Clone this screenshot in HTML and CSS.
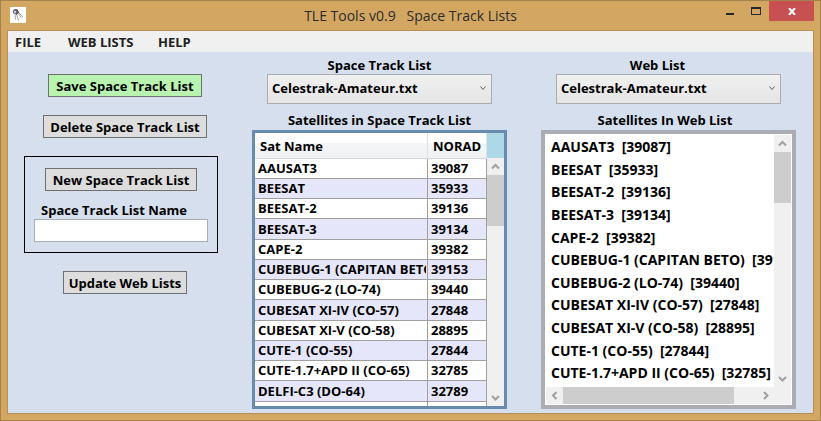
FILE: index.html
```html
<!DOCTYPE html>
<html lang="en">
<head>
<meta charset="utf-8">
<title>TLE Tools v0.9 Space Track Lists</title>
<link rel="stylesheet" href="styles.css">
</head>
<body>
<div class="window">
  <header class="titlebar">
    <svg class="app-icon" viewBox="0 0 16 16" aria-hidden="true">
      <rect width="16" height="16" fill="#fff"/>
      <path d="M5 7l.5 5.500M6.500 7l2 6.500M8 6l3.500 5M8 5l5 5" stroke="#a5a3a8" stroke-width="1" fill="none"/>
      <circle cx="5.500" cy="4.500" r="2.600" fill="#64617c"/>
      <circle cx="5" cy="5" r="1.200" fill="#c9c8dc"/>
      <path d="M7 2.500l1.500 3L6 7.500" stroke="#3b3850" fill="none"/>
    </svg>
    <h1 class="title">TLE Tools v0.9 &nbsp; Space Track Lists</h1>
    <div class="caption-buttons">
      <button class="caption" aria-label="Minimize"><svg viewBox="0 0 10 8" width="10" height="8"><rect x="1" y="6" width="8" height="2" fill="#26282c"/></svg></button>
      <button class="caption" aria-label="Maximize"><svg viewBox="0 0 10 8" width="10" height="8"><path fill="#26282c" fill-rule="evenodd" d="M0 0h10v8H0zM1 2v5h8V2z"/></svg></button>
      <button class="caption close" aria-label="Close"><svg viewBox="0 0 8 7" width="8" height="7"><path d="M1 0l6 7M7 0L1 7" stroke="#fff" stroke-width="2"/></svg></button>
    </div>
  </header>
  <div class="client">
    <nav class="menu">
      <a class="menu-file" href="#">FILE</a>
      <a class="menu-web" href="#">WEB LISTS</a>
      <a href="#">HELP</a>
    </nav>
    <main class="content">
      <section class="actions">
        <button class="btn save">Save Space Track List</button>
        <button class="btn delete">Delete Space Track List</button>
        <div class="new-list">
          <button class="btn new">New Space Track List</button>
          <label for="list-name">Space Track List Name</label>
          <input id="list-name" type="text">
        </div>
        <button class="btn update">Update Web Lists</button>
      </section>

      <section class="column">
        <label class="heading" for="track-list">Space Track List</label>
        <div class="combo">
          <select id="track-list"><option>Celestrak-Amateur.txt</option></select>
          <svg class="chevron" viewBox="0 0 6 5"><path d="M.5 .5L3 3.500 5.500 .5" /></svg>
        </div>
        <h2 class="heading second">Satellites in Space Track List</h2>
        <div class="grid-box">
          <div class="table-clip">
            <table>
              <colgroup><col><col class="col-norad"></colgroup>
              <thead><tr><th>Sat Name</th><th>NORAD</th></tr></thead>
              <tbody>
                <tr><td>AAUSAT3</td><td>39087</td></tr>
                <tr><td>BEESAT</td><td>35933</td></tr>
                <tr><td>BEESAT-2</td><td>39136</td></tr>
                <tr><td>BEESAT-3</td><td>39134</td></tr>
                <tr><td>CAPE-2</td><td>39382</td></tr>
                <tr><td><div class="clip">CUBEBUG-1 (CAPITAN BETO)</div></td><td>39153</td></tr>
                <tr><td>CUBEBUG-2 (LO-74)</td><td>39440</td></tr>
                <tr><td>CUBESAT XI-IV (CO-57)</td><td>27848</td></tr>
                <tr><td>CUBESAT XI-V (CO-58)</td><td>28895</td></tr>
                <tr><td>CUTE-1 (CO-55)</td><td>27844</td></tr>
                <tr><td>CUTE-1.7+APD II (CO-65)</td><td>32785</td></tr>
                <tr><td>DELFI-C3 (DO-64)</td><td>32789</td></tr>
                <tr><td></td><td></td></tr>
              </tbody>
            </table>
          </div>
          <div class="table-side">
            <div class="corner"></div>
            <div class="vscroll">
              <svg class="arrow" viewBox="0 0 17 17"><path d="M5 10.500L8.500 7 12 10.500"/></svg>
              <div class="vthumb"></div>
              <svg class="arrow end" viewBox="0 0 17 17"><path d="M5 7L8.500 10.500 12 7"/></svg>
            </div>
          </div>
        </div>
      </section>

      <section class="column">
        <label class="heading web-label" for="web-list">Web List</label>
        <div class="combo">
          <select id="web-list"><option>Celestrak-Amateur.txt</option></select>
          <svg class="chevron" viewBox="0 0 6 5"><path d="M.5 .5L3 3.500 5.500 .5" /></svg>
        </div>
        <h2 class="heading second web-heading">Satellites In Web List</h2>
        <div class="list-box">
          <ul class="items">
            <li>AAUSAT3 &nbsp;[39087]</li>
            <li>BEESAT &nbsp;[35933]</li>
            <li>BEESAT-2 &nbsp;[39136]</li>
            <li>BEESAT-3 &nbsp;[39134]</li>
            <li>CAPE-2 &nbsp;[39382]</li>
            <li>CUBEBUG-1 (CAPITAN BETO) &nbsp;[39153]</li>
            <li>CUBEBUG-2 (LO-74) &nbsp;[39440]</li>
            <li>CUBESAT XI-IV (CO-57) &nbsp;[27848]</li>
            <li>CUBESAT XI-V (CO-58) &nbsp;[28895]</li>
            <li>CUTE-1 (CO-55) &nbsp;[27844]</li>
            <li>CUTE-1.7+APD II (CO-65) &nbsp;[32785]</li>
          </ul>
          <div class="vscroll">
            <svg class="arrow" viewBox="0 0 17 17"><path d="M5 10.500L8.500 7 12 10.500"/></svg>
            <div class="vthumb"></div>
            <svg class="arrow end" viewBox="0 0 17 17"><path d="M5 7L8.500 10.500 12 7"/></svg>
          </div>
          <div class="hscroll">
            <svg class="arrow" viewBox="0 0 17 17"><path d="M10.500 5L7 8.500 10.500 12"/></svg>
            <div class="hthumb"></div>
            <svg class="arrow end" viewBox="0 0 17 17"><path d="M7 5L10.500 8.500 7 12"/></svg>
          </div>
          <div class="scroll-corner"></div>
        </div>
      </section>
    </main>
  </div>
</div>
</body>
</html>
```
FILE: styles.css
```css
* { box-sizing: border-box; }

body {
  margin: 0;
  font: 700 13px/18px "Open Sans", "Noto Sans", sans-serif;
  color: #000;
}

button, input, select { font: inherit; color: inherit; margin: 0; }

.window {
  display: flex;
  flex-direction: column;
  height: 100vh;
  min-height: 421px;
  padding: 0 6px 6px;
  background: #d3a762;
  border: 1px solid #a5834f;
}

.titlebar {
  display: grid;
  grid-template-columns: 1fr auto 1fr;
  height: 29px;
}

.app-icon { width: 16px; height: 16px; margin: 6px 0 0 3px; }

.title {
  margin: 4px 0 0;
  font-size: 14px;
  font-weight: 400;
  line-height: 22px;
  color: #2b2b2b;
  white-space: nowrap;
}

.caption-buttons { display: flex; justify-content: flex-end; }

.caption {
  display: flex;
  align-items: center;
  justify-content: center;
  width: 26px;
  height: 20px;
  padding: 0;
  border: 0;
  background: none;
}

.close { width: 45px; background: #c75050; }

.client {
  display: flex;
  flex-direction: column;
  flex: 1;
  min-height: 0;
  border: 1px solid #b78f52;
  background: #d6dfee;
}

.menu {
  display: flex;
  height: 21px;
  padding: 1px 7px 0;
  background: #f0f0f0;
}

.menu a { color: #212121; text-decoration: none; line-height: 20px; }
.menu-file { width: 53px; }
.menu-web { width: 90px; }

.content {
  display: grid;
  grid-template-columns: 194fr 255fr 255fr;
  gap: 34px;
  flex: 1;
  min-height: 0;
  padding: 4px 17px 4px 16px;
}

.actions {
  display: flex;
  flex-direction: column;
  align-items: center;
  gap: 18px;
  padding-top: 18px;
}

.actions > .btn { margin-left: 8px; }

.btn {
  height: 23px;
  padding: 0;
  border: 1px solid #707070;
  background: #ddd;
  line-height: 20px;
  white-space: nowrap;
}

.save { width: 154px; background: #b8f4b0; }
.delete { width: 164px; }
.new { width: 152px; }
.update { width: 124px; }

.new-list {
  display: flex;
  flex-direction: column;
  align-items: center;
  align-self: stretch;
  height: 97px;
  padding: 11px 9px 0;
  border: 1px solid #000;
}

.new-list label { align-self: flex-start; margin: 10px 0 0 7px; }

.new-list input {
  width: 100%;
  height: 23px;
  border: 1px solid #abadb3;
  background: #fff;
}

.column {
  display: flex;
  flex-direction: column;
  min-width: 0;
  min-height: 0;
}

.heading {
  margin: 0;
  font-size: 13px;
  font-weight: 700;
  line-height: 18px;
  text-align: center;
}

.second { margin: 7px 0 1px; }
.web-label { padding-right: 22px; }
.web-heading { padding-right: 7px; }

.combo { position: relative; margin: 0 15px; height: 30px; }

.combo select {
  width: 100%;
  height: 100%;
  padding: 0 4px 2px;
  border: 1px solid #acacac;
  border-radius: 0;
  background: linear-gradient(#f0f0f0, #e5e5e5);
  appearance: none;
}

.chevron {
  position: absolute;
  top: 12px;
  right: 6px;
  width: 6px;
  height: 5px;
  pointer-events: none;
}

.chevron path { fill: none; stroke: #606060; }

.grid-box {
  display: flex;
  flex: 1;
  min-height: 0;
  border: 3px solid #688caf;
  background: #fff;
}

.table-clip { flex: 1; min-width: 0; overflow: hidden; }

table {
  width: 100%;
  table-layout: fixed;
  border-collapse: separate;
  border-spacing: 0;
}

.col-norad { width: 59px; }

th, td {
  padding: 0 3px;
  text-align: left;
  white-space: nowrap;
  overflow: hidden;
}

th {
  height: 26px;
  padding: 1px 5px 0;
  font-weight: 700;
  background: linear-gradient(#fff 40%, #f5f6f8 40%, #f0f1f3);
  border-right: 1px solid #dfe1e4;
  border-bottom: 1px solid #d0dade;
}

td {
  height: 20px;
  padding-right: 0;
  padding-bottom: 1px;
  border-right: 1px solid #a0a0a0;
  border-bottom: 1px solid #a0a0a0;
}

tbody tr:nth-child(4n) td { height: 21px; }
tbody tr:nth-child(even) { background: #e6e6fa; }
.clip { margin-right: 1px; overflow: hidden; }

.table-side { display: flex; flex-direction: column; width: 17px; }
.corner { height: 25px; background: #add8e6; }

.vscroll {
  display: flex;
  flex-direction: column;
  flex: 1;
  min-height: 0;
  background: #f0f0f0;
}

.vthumb { height: 51px; background: #cdcdcd; }
.arrow { width: 17px; height: 17px; flex: none; }
.arrow path { fill: none; stroke: #a0a0a0; stroke-width: 2; }
.vscroll .end { margin-top: auto; }

.list-box {
  display: grid;
  grid-template: 1fr 17px / 1fr 17px;
  flex: 1;
  min-height: 0;
  padding: 1px;
  border: 4px solid #abadb3;
  background: #fff;
}

.items {
  min-width: 0;
  min-height: 0;
  margin: 0;
  padding: 1px 0 0 5px;
  overflow: hidden;
  font-size: 14px;
  list-style: none;
  white-space: nowrap;
}

.items li { height: 23px; line-height: 22px; }
.items li:nth-child(5n), .items li:nth-child(5n + 2) { height: 22px; }

.hscroll { display: flex; background: #f0f0f0; }
.hthumb { width: 75%; background: #cdcdcd; }
.hscroll .end { margin-left: auto; }
.scroll-corner { background: #f0f0f0; }
```
